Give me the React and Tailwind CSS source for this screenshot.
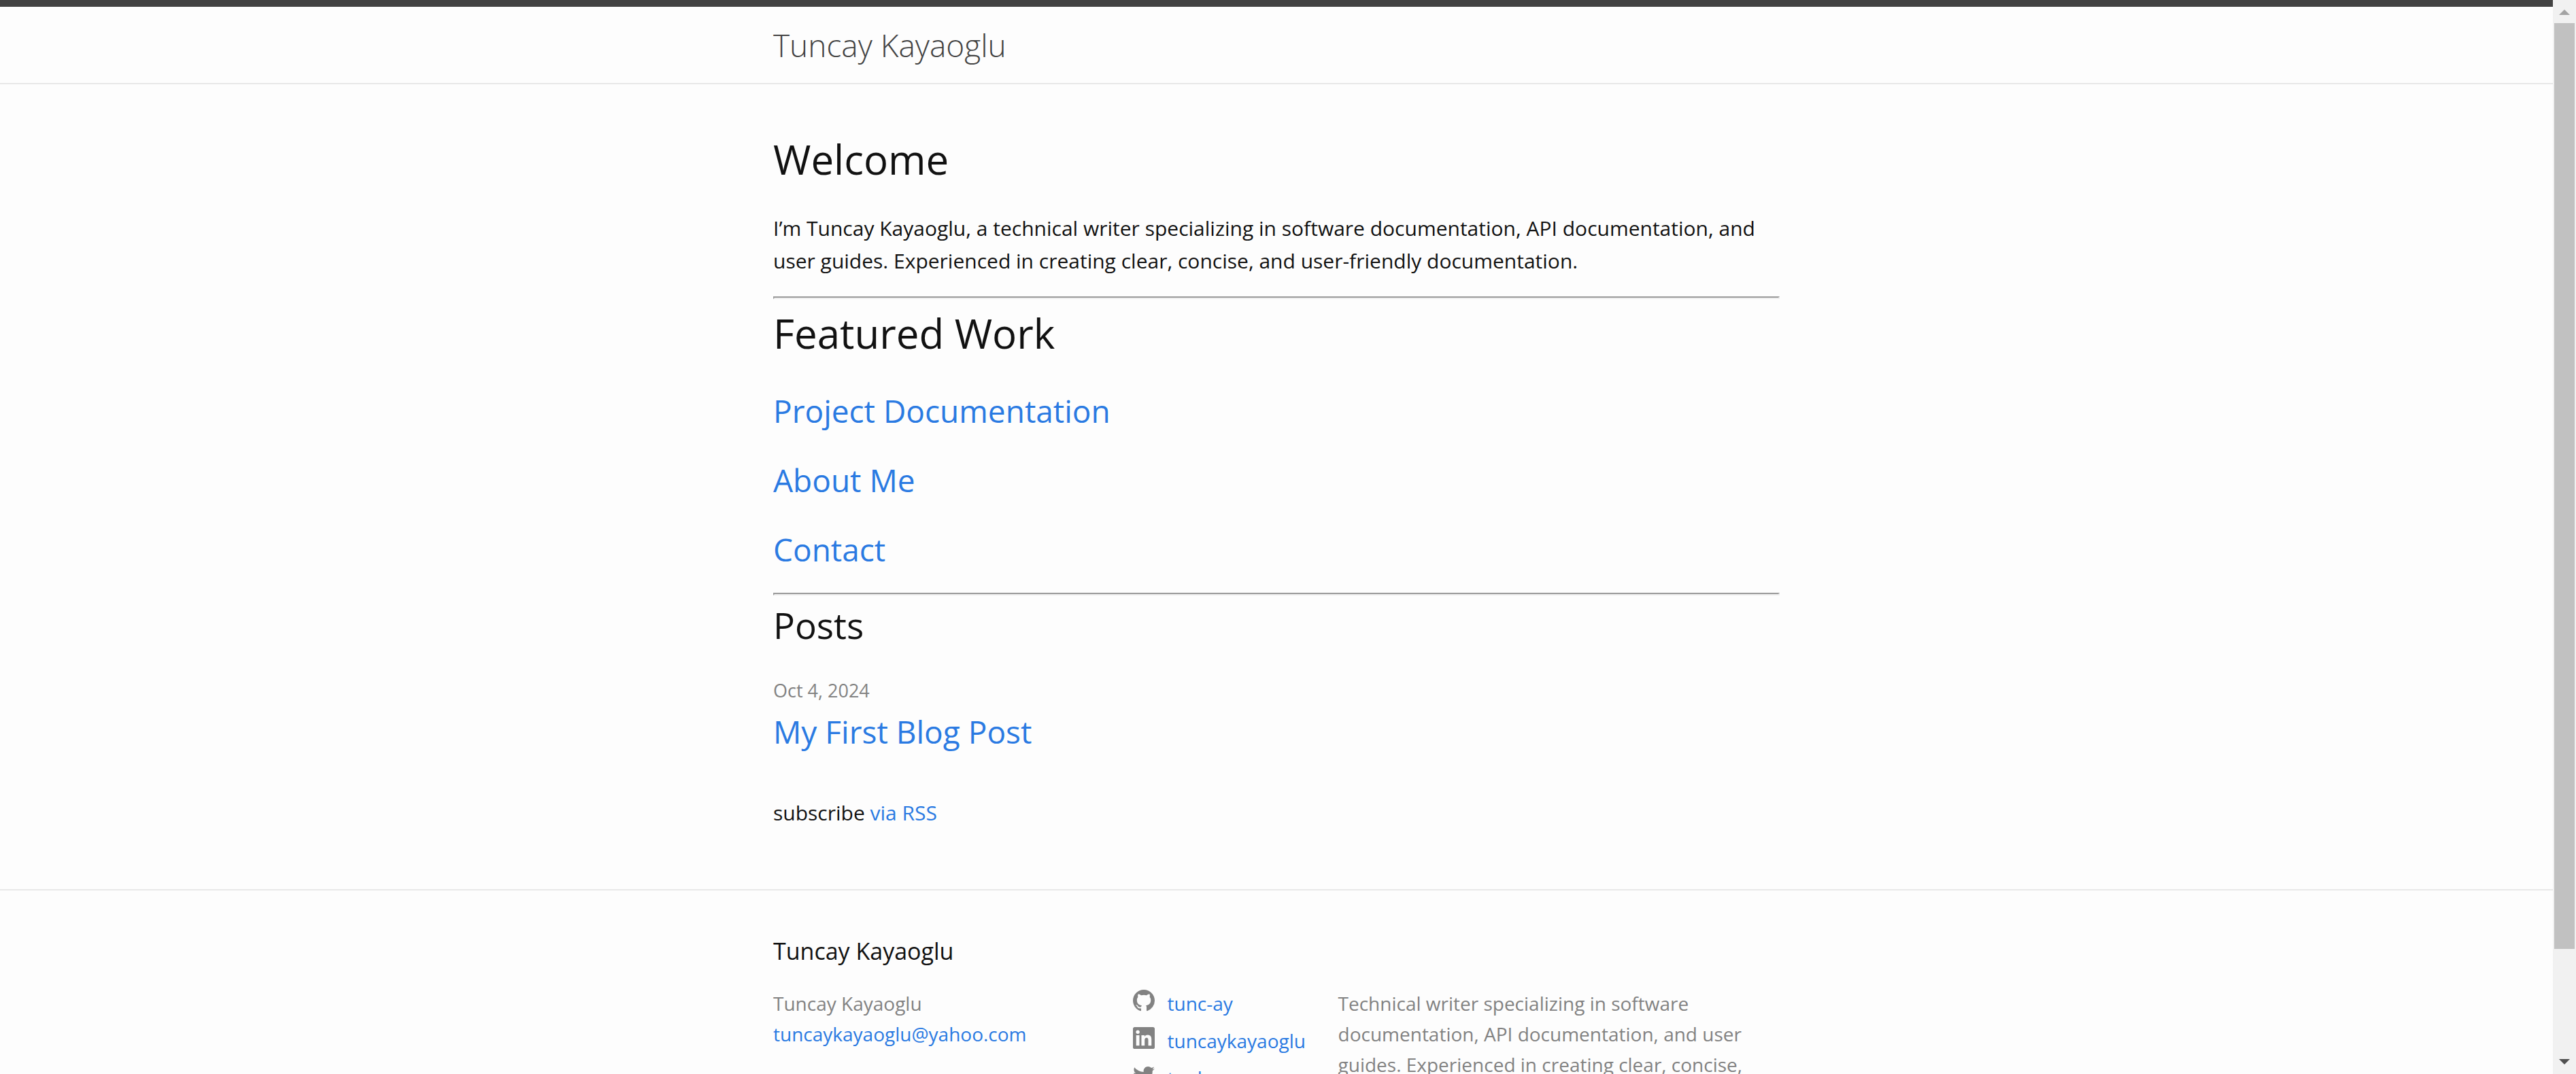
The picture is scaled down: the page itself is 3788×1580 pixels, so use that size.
import React from "react";

const FONT = "font-['Segoe_UI','Open_Sans',sans-serif]";

const GITHUB =
  "M8 0C3.58 0 0 3.58 0 8c0 3.54 2.29 6.53 5.47 7.59.4.07.55-.17.55-.38 0-.19-.01-.82-.01-1.49-2.01.37-2.53-.49-2.69-.94-.09-.23-.48-.94-.82-1.13-.28-.15-.68-.52-.01-.53.63-.01 1.08.58 1.23.82.72 1.21 1.87.87 2.33.66.07-.52.28-.87.51-1.07-1.78-.2-3.64-.89-3.64-3.95 0-.87.31-1.59.82-2.15-.08-.2-.36-1.02.08-2.12 0 0 .67-.21 2.2.82.64-.18 1.32-.27 2-.27.68 0 1.36.09 2 .27 1.53-1.04 2.2-.82 2.2-.82.44 1.1.16 1.92.08 2.12.51.56.82 1.27.82 2.15 0 3.07-1.87 3.75-3.65 3.95.29.25.54.73.54 1.48 0 1.07-.01 1.93-.01 2.2 0 .21.15.46.55.38A8.013 8.013 0 0 0 16 8c0-4.42-3.58-8-8-8z";
const LINKEDIN =
  "M13.632 13.635h-2.37V9.922c0-.886-.018-2.025-1.234-2.025-1.235 0-1.424.964-1.424 1.96v3.778h-2.37V6H8.51v1.04h.03c.318-.6 1.092-1.233 2.247-1.233 2.4 0 2.845 1.58 2.845 3.637v4.188zM3.558 4.955c-.762 0-1.376-.617-1.376-1.377 0-.758.614-1.375 1.376-1.375.76 0 1.376.617 1.376 1.375 0 .76-.617 1.377-1.376 1.377zm1.188 8.68H2.37V6h2.376v7.635zM14.816 0H1.18C.528 0 0 .516 0 1.153v13.694C0 15.484.528 16 1.18 16h13.635c.652 0 1.185-.516 1.185-1.153V1.153C16 .516 15.467 0 14.815 0z";
const TWITTER =
  "M15.969 3.058c-.586.26-1.217.436-1.878.515.675-.405 1.194-1.045 1.438-1.809-.632.375-1.332.647-2.076.793-.596-.636-1.446-1.033-2.387-1.033-1.806 0-3.27 1.464-3.27 3.27 0 .256.029.506.085.745C5.163 5.404 2.753 4.102 1.14 2.124c-.281.482-.442 1.044-.442 1.644 0 1.134.577 2.135 1.455 2.722-.536-.017-1.04-.164-1.481-.409v.041c0 1.584 1.127 2.906 2.623 3.206-.274.075-.563.115-.861.115-.211 0-.416-.021-.615-.059.416 1.299 1.624 2.245 3.055 2.271-1.119.877-2.529 1.4-4.061 1.4-.264 0-.524-.015-.78-.046 1.447.928 3.166 1.469 5.013 1.469 6.015 0 9.304-4.983 9.304-9.304 0-.142-.003-.283-.009-.423.639-.461 1.194-1.037 1.632-1.692z";

const SOCIAL = [
  { name: "tunc-ay", path: GITHUB },
  { name: "tuncaykayaoglu", path: LINKEDIN },
  { name: "tunkay", path: TWITTER },
];

const WORK = ["Project Documentation", "About Me", "Contact"];

function Wrapper({ children, className = "" }) {
  return <div className={"mx-auto max-w-[1600px] px-[60px] " + className}>{children}</div>;
}

function Link({ children, className = "" }) {
  return (
    <a href="#" className={"text-[#2a7ae2] hover:underline " + className}>
      {children}
    </a>
  );
}

function Rule() {
  return <hr className="h-1 border-2 border-t-[#9a9a9a] border-r-[#eeeeee] border-b-[#eeeeee] border-l-[#9a9a9a]" />;
}

function Header() {
  return (
    <header className="border-t-[10px] border-b-2 border-t-[#424242] border-b-[#e8e8e8]">
      <Wrapper className="h-28">
        <a href="#" className="text-[46px] leading-[112px] font-light text-[#424242]">
          Tuncay Kayaoglu
        </a>
      </Wrapper>
    </header>
  );
}

function Main() {
  return (
    <main className="py-[60px]">
      <Wrapper>
        <h1 className="mb-[30px] pt-1 text-[60px] leading-[92px]">Welcome</h1>
        <p className="mb-7 pt-0.5">
          I’m Tuncay Kayaoglu, a technical writer specializing in software documentation, API
          documentation, and user guides. Experienced in creating clear, concise, and user-friendly
          documentation.
        </p>
        <Rule />
        <h1 className="mb-[30px] pt-1 text-[60px] leading-[92px]">Featured Work</h1>
        {WORK.map((title) => (
          <h2 key={title} className="mb-[30px] pt-1 text-[46px] leading-[68px]">
            <Link>{title}</Link>
          </h2>
        ))}
        <Rule />
        <h2 className="mb-[30px] pt-1 text-[53px] leading-[80px]">Posts</h2>
        <ul className="mb-[60px]">
          <li>
            <time dateTime="2024-10-04" className="block pt-1 text-[27px] leading-[44px] text-[#828282]">
              Oct 4, 2024
            </time>
            <h3 className="pt-1 text-[46px] leading-[68px]">
              <Link>My First Blog Post</Link>
            </h3>
          </li>
        </ul>
        <p className="mb-7 pt-0.5">
          subscribe <Link>via RSS</Link>
        </p>
      </Wrapper>
    </main>
  );
}

function Footer() {
  return (
    <footer className="border-t-2 border-[#e8e8e8] py-[60px]">
      <Wrapper>
        <h2 className="mb-[30px] pt-1 text-[34px] leading-[50px]">Tuncay Kayaoglu</h2>
        <div className="-ml-[30px] flex text-[28px] leading-[45px] text-[#828282]">
          <ul className="w-[35%] pl-[30px]">
            <li>Tuncay Kayaoglu</li>
            <li>
              <Link>tuncaykayaoglu@yahoo.com</Link>
            </li>
          </ul>
          <ul className="w-[20%] pl-[30px]">
            {SOCIAL.map(({ name, path }) => (
              <li key={name} className="flex h-[55px] items-start">
                <svg viewBox="0 0 16 16" className="mt-0.5 mr-[19px] size-8 shrink-0 fill-[#828282]">
                  <path fillRule="evenodd" d={path} />
                </svg>
                <Link>{name}</Link>
              </li>
            ))}
          </ul>
          <p className="w-[45%] pl-[30px]">
            Technical writer specializing in software documentation, API documentation, and user
            guides. Experienced in creating clear, concise, and user-friendly documentation.
          </p>
        </div>
      </Wrapper>
    </footer>
  );
}

function Scrollbar() {
  return (
    <div aria-hidden="true" className="flex w-[34px] shrink-0 flex-col items-center bg-[#f1f1f1]">
      <svg viewBox="0 0 34 34" className="size-[34px] shrink-0 fill-[#a3a3a3]">
        <path d="M9 22L17 14L25 22Z" />
      </svg>
      <div className="w-[30px] flex-[1362] bg-[#c1c1c1]" />
      <div className="flex-[150]" />
      <svg viewBox="0 0 34 34" className="size-[34px] shrink-0 fill-[#505050]">
        <path d="M9 12L25 12L17 20Z" />
      </svg>
    </div>
  );
}

export default function App() {
  return (
    <div className={"flex h-screen overflow-hidden bg-[#fdfdfd] text-[30px] leading-[48px] text-[#111111] " + FONT}>
      <div className="min-w-0 flex-1 overflow-hidden">
        <Header />
        <Main />
        <Footer />
      </div>
      <Scrollbar />
    </div>
  );
}
